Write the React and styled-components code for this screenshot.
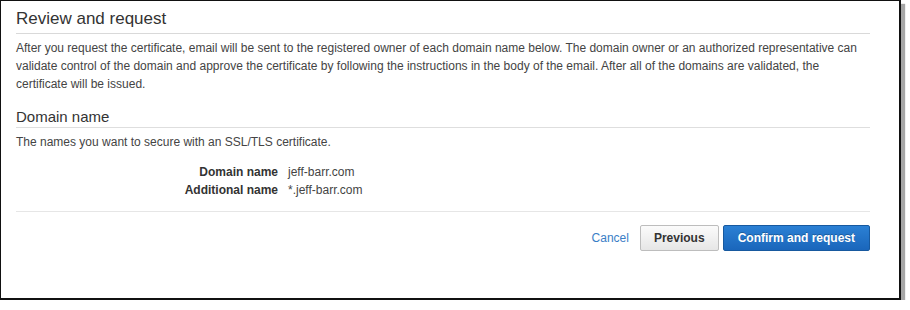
import React from "react";
import styled, { createGlobalStyle } from "styled-components";

const GlobalStyle = createGlobalStyle`
  body {
    margin: 0;
    background: #ffffff;
    font-family: "Liberation Sans", Arial, sans-serif;
  }
`;

const Frame = styled.div`
  box-sizing: border-box;
  width: 901px;
  height: 300px;
  border-style: solid;
  border-color: #111;
  border-width: 1px 2px 2px 1px;
  background: #fff;
  box-shadow: 4px 4px 1px rgba(0, 0, 0, 0.35);
  padding: 7px 29px 0 15px;
`;

const Title = styled.h2`
  margin: 0;
  font-size: 17px;
  font-weight: normal;
  line-height: 22px;
  color: #333;
  padding-bottom: 3px;
  border-bottom: 1px solid #d9d9d9;
`;

const SubTitle = styled.h3`
  margin: 15px 0 0;
  font-size: 15px;
  font-weight: normal;
  line-height: 18px;
  color: #333;
  padding-bottom: 1px;
  border-bottom: 1px solid #dedede;
`;

const Text = styled.p`
  margin: ${(p) => p.$top}px 0 0;
  font-size: 12px;
  line-height: 18px;
  color: #444;
  max-width: 850px;
`;

const Details = styled.dl`
  display: grid;
  grid-template-columns: 262px auto;
  column-gap: 10px;
  margin: 12px 0 0;
  font-size: 12px;
  line-height: 18px;
  padding-bottom: 12px;
  border-bottom: 1px solid #e6e6e6;
`;

const Label = styled.dt`
  text-align: right;
  font-weight: bold;
  color: #333;
`;

const Value = styled.dd`
  margin: 0;
  color: #444;
`;

const Actions = styled.div`
  display: flex;
  justify-content: flex-end;
  align-items: center;
  gap: 4px;
  margin-top: 13px;
`;

const CancelLink = styled.a`
  font-size: 12px;
  color: #3a7ec6;
  text-decoration: none;
  margin-right: 7px;
  cursor: pointer;
`;

const Button = styled.button`
  box-sizing: border-box;
  height: 26px;
  padding: 0 ${(p) => (p.$primary ? 14 : 13)}px;
  font-family: "Liberation Sans", Arial, sans-serif;
  font-size: 12px;
  font-weight: bold;
  border-radius: 2px;
  cursor: pointer;
  border: 1px solid ${(p) => (p.$primary ? "#17599f" : "#bdbdbd")};
  color: ${(p) => (p.$primary ? "#fff" : "#333")};
  background: ${(p) =>
    p.$primary
      ? "linear-gradient(#2b80d4, #1a66bb)"
      : "linear-gradient(#fbfbfb, #e6e6e6)"};
  text-shadow: ${(p) => (p.$primary ? "0 -1px 0 rgba(0,0,0,0.25)" : "none")};
`;

export default function App() {
  return (
    <>
      <GlobalStyle />
      <Frame>
        <Title>Review and request</Title>
        <Text $top={5}>
          After you request the certificate, email will be sent to the
          registered owner of each domain name below. The domain owner or an
          authorized representative can validate control of the domain and
          approve the certificate by following the instructions in the body of
          the email. After all of the domains are validated, the certificate
          will be issued.
        </Text>
        <SubTitle>Domain name</SubTitle>
        <Text $top={5}>The names you want to secure with an SSL/TLS certificate.</Text>
        <Details>
          <Label>Domain name</Label>
          <Value>jeff-barr.com</Value>
          <Label>Additional name</Label>
          <Value>*.jeff-barr.com</Value>
        </Details>
        <Actions>
          <CancelLink>Cancel</CancelLink>
          <Button>Previous</Button>
          <Button $primary>Confirm and request</Button>
        </Actions>
      </Frame>
    </>
  );
}
